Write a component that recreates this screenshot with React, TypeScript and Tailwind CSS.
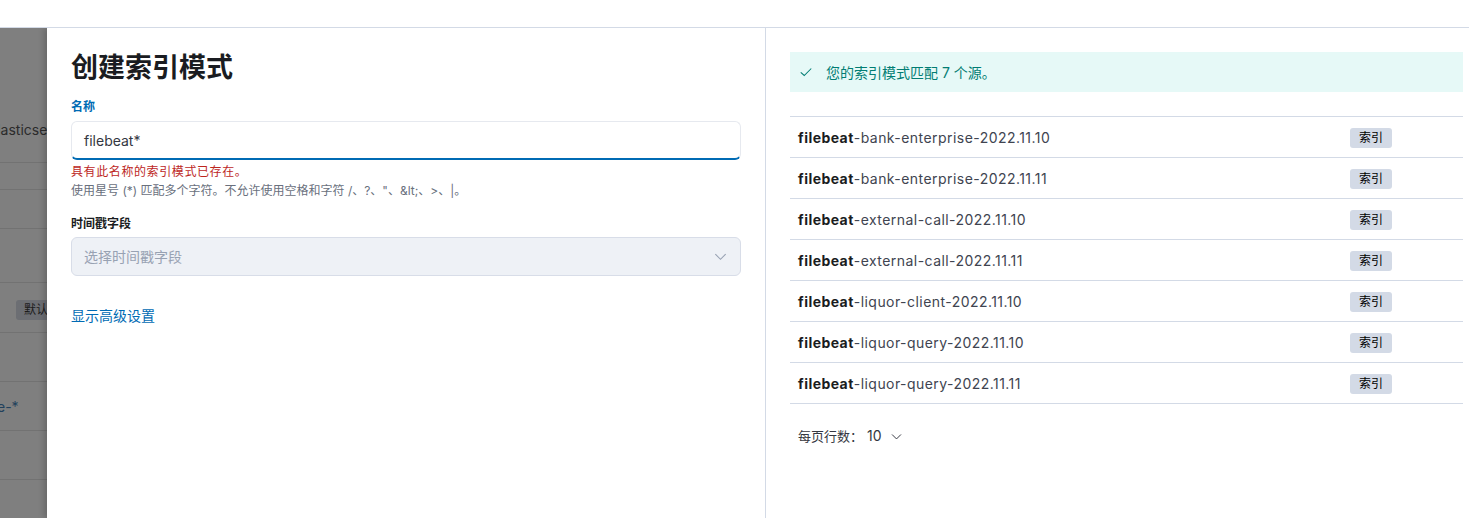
const font = { fontFamily: '"Inter", "Noto Sans CJK SC", sans-serif' }

const indices = [
  'bank-enterprise-2022.11.10',
  'bank-enterprise-2022.11.11',
  'external-call-2022.11.10',
  'external-call-2022.11.11',
  'liquor-client-2022.11.10',
  'liquor-query-2022.11.10',
  'liquor-query-2022.11.11',
]

const Chevron = ({ className }: { className?: string }) => (
  <svg viewBox="0 0 16 16" className={className} fill="none" stroke="currentColor" strokeWidth="1.2">
    <path d="M2.5 5.5 8 11l5.5-5.5" />
  </svg>
)

// the page behind the flyout, dimmed by the overlay
const BackdropStrip = () => (
  <div className="w-[47px] shrink-0 overflow-hidden bg-[#7f7f7f] text-[14px] text-[#2b2b2b]">
    <div className="h-[135px] border-b border-[#727272] pt-[92px]">
      <span className="block whitespace-nowrap -ml-[11px] leading-[20px]">elasticsearch</span>
    </div>
    <div className="h-[27px] border-b border-[#727272]" />
    <div className="h-[39px] border-b border-[#727272]" />
    <div className="h-[54px] border-b border-[#727272]" />
    <div className="h-[50px] border-b border-[#727272] flex items-start pt-[17px] pl-[16px]">
      <span className="whitespace-nowrap rounded-[3px] bg-[#6c6e73] px-[8px] text-[12px] leading-[20px] text-[#1c1c1c]">默认</span>
    </div>
    <div className="h-[49px] border-b border-[#727272]" />
    <div className="h-[49px] border-b border-[#727272] flex items-center">
      <span className="whitespace-nowrap -ml-[3px] text-[#22415c]">e-*</span>
    </div>
    <div className="h-[49px] border-b border-[#727272]" />
  </div>
)

const LeftPanel = () => (
  <div className="w-[719px] shrink-0 border-r border-[#d3dae6] px-[24px] pt-[22px]">
    <h1 className="text-[27px] font-bold leading-[36px] text-[#1a1c21]">创建索引模式</h1>

    <div className="mt-[12px] text-[12px] font-semibold leading-[18px] text-[#006bb4]">名称</div>
    <div className="mt-[5px] flex h-[39px] items-center rounded-[6px] border border-[#e6e9ef] border-b-2 border-b-[#006bb4] bg-white px-[12px] text-[14px] text-[#343741]">
      filebeat*
    </div>
    <div className="mt-[4px] text-[12px] leading-[16px] tracking-[0.6px] text-[#bd271e]">具有此名称的索引模式已存在。</div>
    <div className="mt-[3px] text-[12px] leading-[16px] text-[#69707d]">
      使用星号 (*) 匹配多个字符。不允许使用空格和字符 /、?、"、&amp;lt;、&gt;、|。
    </div>

    <div className="mt-[16px] text-[12px] font-semibold leading-[18px] text-[#1a1c21]">时间戳字段</div>
    <div className="mt-[4px] flex h-[39px] items-center justify-between rounded-[6px] border border-[#d8dde8] bg-[#eef1f6] pl-[12px] pr-[12px] text-[14px] text-[#98a2b3]">
      <span>选择时间戳字段</span>
      <Chevron className="h-[15px] w-[15px] text-[#98a2b3]" />
    </div>

    <div className="mt-[30px] text-[14px] leading-[20px] text-[#006bb4]">显示高级设置</div>
  </div>
)

const RightPanel = () => (
  <div className="flex-1 pl-[24px] pr-[6px] pt-[24px]">
    <div className="flex h-[40px] items-center gap-[13px] bg-[#e6f9f7] px-[9px] text-[14px] text-[#017d73]">
      <svg viewBox="0 0 16 16" className="h-[14px] w-[14px]" fill="none" stroke="currentColor" strokeWidth="1.2">
        <path d="M2 8.5 6 12l8-8" />
      </svg>
      <span>您的索引模式匹配 7 个源。</span>
    </div>

    <div className="mt-[24px] border-t border-[#d3dae6]">
      {indices.map((name) => (
        <div key={name} className="flex h-[41px] items-center border-b border-[#d3dae6] text-[14px] text-[#404450]">
          <div className="flex-1 px-[8px] tracking-[0.45px]">
            <span className="font-bold text-[#1a1c21]">filebeat</span>-{name}
          </div>
          <div className="w-[113px] shrink-0">
            <span className="inline-block rounded-[3px] bg-[#d3dae6] px-[9px] text-[12px] leading-[20px] text-[#000]">索引</span>
          </div>
        </div>
      ))}
    </div>

    <div className="mt-[22px] flex items-center px-[8px] text-[13px] leading-[20px] text-[#343741]">
      <span>每页行数：</span>
      <span className="ml-[4px] text-[14px]">10</span>
      <Chevron className="ml-[8px] h-[13px] w-[13px] text-[#343741]" />
    </div>
  </div>
)

export default function App() {
  return (
    <div style={font} className="flex h-[518px] w-[1469px] flex-col overflow-hidden bg-white">
      <div className="h-[28px] shrink-0 border-b border-[#d3dae6] bg-white" />
      <div className="flex flex-1 overflow-hidden">
        <BackdropStrip />
        <div className="flex flex-1 bg-white shadow-[-3px_0_6px_rgba(0,0,0,0.18)]">
          <LeftPanel />
          <RightPanel />
        </div>
      </div>
    </div>
  )
}
